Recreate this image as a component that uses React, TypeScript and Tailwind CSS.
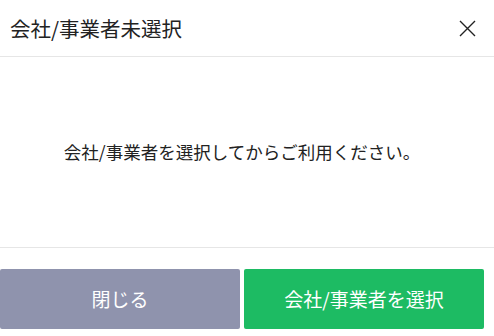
import React from 'react'

export default function App() {
  return (
    <div
      className="w-[494px] h-[336px] bg-white overflow-hidden flex flex-col"
      style={{ fontFamily: '"Noto Sans CJK JP", "Noto Sans", sans-serif' }}
    >
      {/* ヘッダー */}
      <div className="h-[57px] flex items-center justify-between pl-[10px] pr-[18px] border-b border-[#e6e6e6] shrink-0">
        <h1 className="text-[20.5px] text-[#222] leading-none">会社/事業者未選択</h1>
        <button className="w-[18px] h-[18px] flex items-center justify-center">
          <svg width="17" height="17" viewBox="0 0 17 17" fill="none" stroke="#222" strokeWidth="1.4">
            <path d="M1 1L16 16M16 1L1 16" />
          </svg>
        </button>
      </div>

      {/* 本文 */}
      <div className="h-[191px] flex items-center justify-center pr-[10px] border-b border-[#e6e6e6] shrink-0">
        <p className="text-[17.5px] text-[#222] leading-none">会社/事業者を選択してからご利用ください。</p>
      </div>

      {/* ボタン */}
      <div className="flex gap-[4px] pt-[21px] pr-[10px]">
        <button className="w-[240px] h-[60px] rounded-[2px] bg-[#8f93ad] text-white text-[19px]">
          閉じる
        </button>
        <button className="w-[240px] h-[60px] rounded-[2px] bg-[#1dbb63] text-white text-[19px]">
          会社/事業者を選択
        </button>
      </div>
    </div>
  )
}
